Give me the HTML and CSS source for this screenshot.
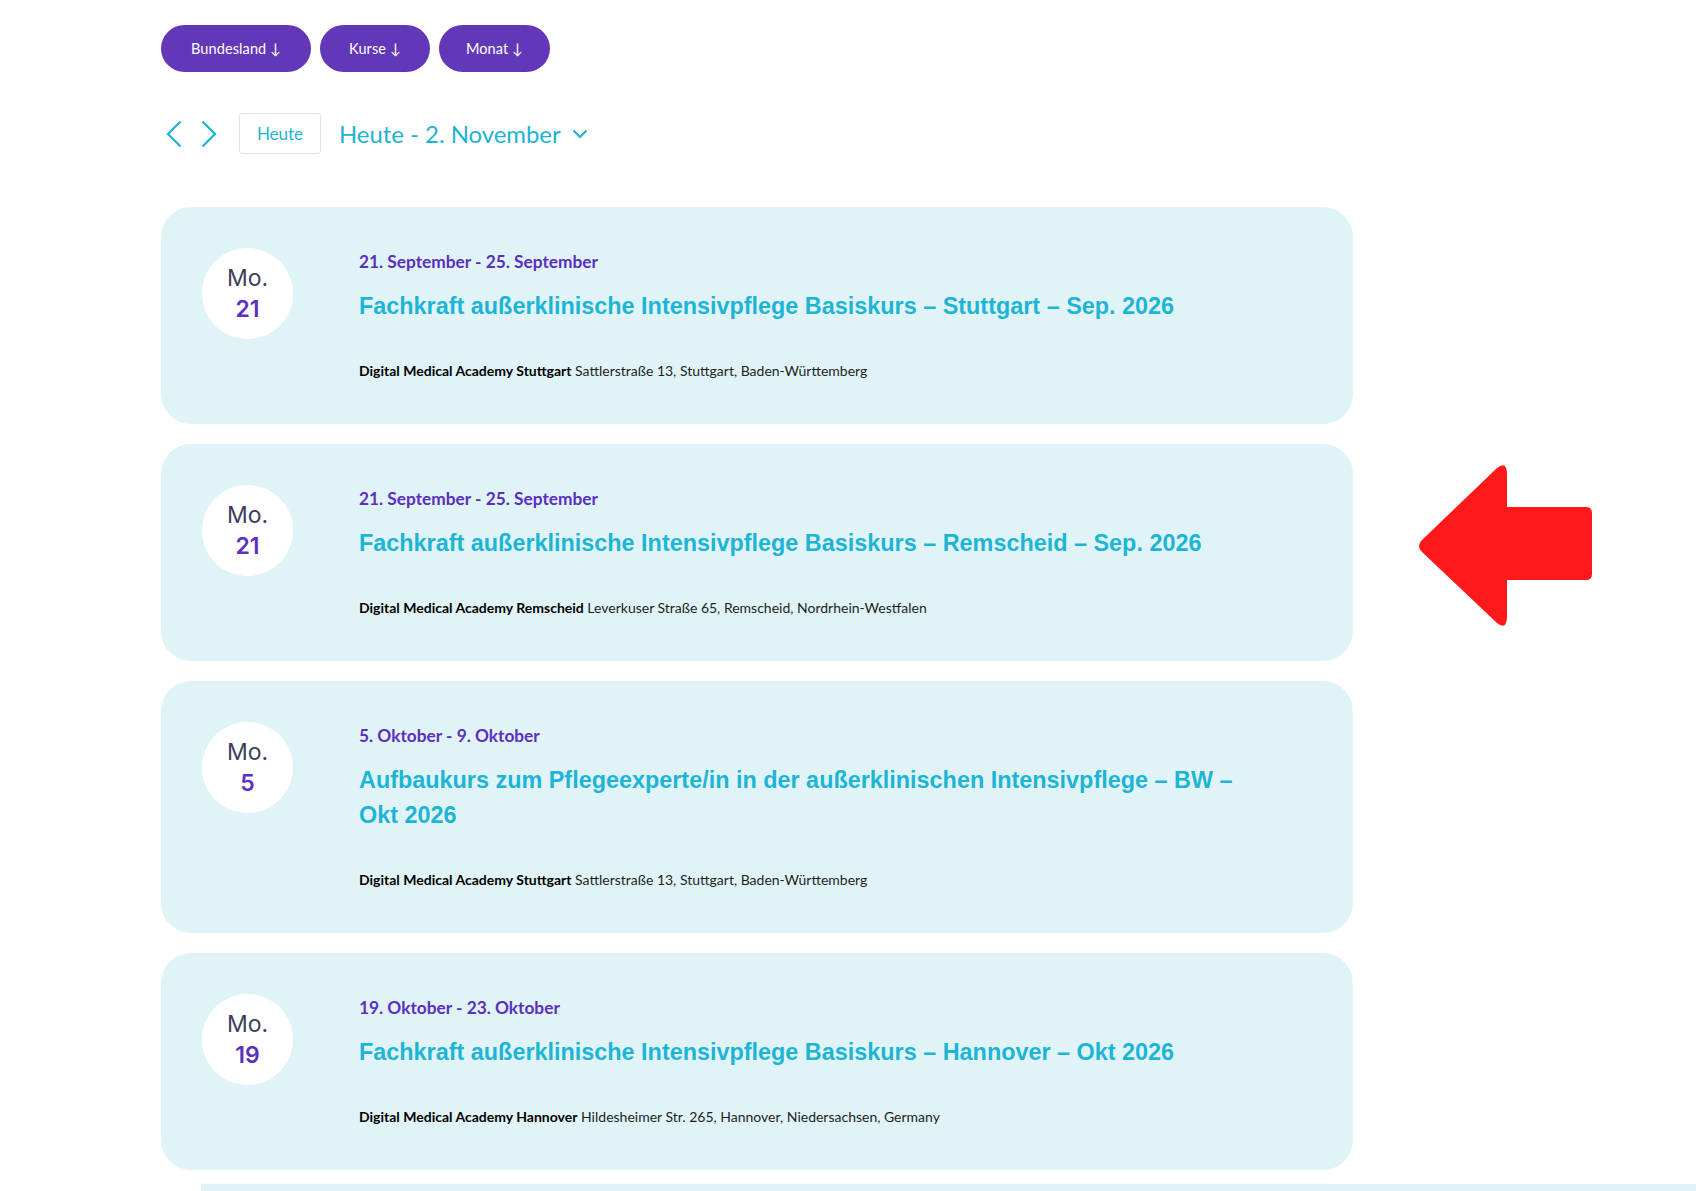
FILE: index.html
```html
<!DOCTYPE html>
<html lang="de">
<head>
<meta charset="utf-8">
<title>Kurse</title>
<link rel="stylesheet" href="styles.css">
</head>
<body>
<div class="page">
  <div class="filters">
    <button class="pill">Bundesland ↓</button>
    <button class="pill">Kurse ↓</button>
    <button class="pill">Monat ↓</button>
  </div>

  <div class="nav">
    <span class="nav-arrow prev"><svg width="16" height="28" viewBox="0 0 16 28"><polyline points="14.5,1.5 2,14 14.5,26.5" fill="none" stroke="#1cb3d4" stroke-width="2.2"/></svg></span>
    <span class="nav-arrow next"><svg width="16" height="28" viewBox="0 0 16 28"><polyline points="1.5,1.5 14,14 1.5,26.5" fill="none" stroke="#1cb3d4" stroke-width="2.2"/></svg></span>
    <span class="today-btn">Heute</span>
    <span class="cal-title">Heute - 2. November</span>
    <span class="cal-chevron"><svg width="16" height="10" viewBox="0 0 16 10"><polyline points="1.5,1.5 8,8 14.5,1.5" fill="none" stroke="#1cb3d4" stroke-width="2"/></svg></span>
  </div>

  <div class="list">
    <article class="card">
      <div class="day"><span class="dow">Mo.</span><span class="dnum">21</span></div>
      <div class="info">
        <div class="range">21. September - 25. September</div>
        <h2 class="title">Fachkraft außerklinische Intensivpflege Basiskurs – Stuttgart – Sep. 2026</h2>
        <div class="venue"><b>Digital Medical Academy Stuttgart</b> Sattlerstraße 13, Stuttgart, Baden-Württemberg</div>
      </div>
    </article>
    <article class="card">
      <div class="day"><span class="dow">Mo.</span><span class="dnum">21</span></div>
      <div class="info">
        <div class="range">21. September - 25. September</div>
        <h2 class="title">Fachkraft außerklinische Intensivpflege Basiskurs – Remscheid – Sep. 2026</h2>
        <div class="venue"><b>Digital Medical Academy Remscheid</b> Leverkuser Straße 65, Remscheid, Nordrhein-Westfalen</div>
      </div>
    </article>
    <article class="card">
      <div class="day"><span class="dow">Mo.</span><span class="dnum">5</span></div>
      <div class="info">
        <div class="range">5. Oktober - 9. Oktober</div>
        <h2 class="title">Aufbaukurs zum Pflegeexperte/in in der außerklinischen Intensivpflege – BW – Okt 2026</h2>
        <div class="venue"><b>Digital Medical Academy Stuttgart</b> Sattlerstraße 13, Stuttgart, Baden-Württemberg</div>
      </div>
    </article>
    <article class="card">
      <div class="day"><span class="dow">Mo.</span><span class="dnum">19</span></div>
      <div class="info">
        <div class="range">19. Oktober - 23. Oktober</div>
        <h2 class="title">Fachkraft außerklinische Intensivpflege Basiskurs – Hannover – Okt 2026</h2>
        <div class="venue"><b>Digital Medical Academy Hannover</b> Hildesheimer Str. 265, Hannover, Niedersachsen, Germany</div>
      </div>
    </article>
    <div class="next-strip"></div>
  </div>
</div>

<svg class="pointer-arrow" width="175" height="162" viewBox="0 0 175 162" aria-hidden="true">
  <path d="M 4,75 L 79,3 Q 89,-5 89,10 L 89,42 L 168,42 Q 174,42 174,48 L 174,109 Q 174,115 168,115 L 89,115 L 89,151 Q 89,166 79,158 L 4,87 Q -2,81 4,75 Z" fill="#fe1a1a"/>
</svg>
</body>
</html>
```

FILE: styles.css
```css
html, body {
  margin: 0;
  padding: 0;
  background: #ffffff;
}

body {
  font-family: "Lato", "Open Sans", sans-serif;
  overflow: hidden;
  height: 1191px;
  position: relative;
}

.page {
  padding: 25px 0 0 161px;
}

.filters {
  display: flex;
  gap: 9px;
}

.pill {
  height: 47px;
  padding: 0 29px;
  border: none;
  border-radius: 24px;
  background: #6238b9;
  color: #ffffff;
  font-family: "Lato", sans-serif;
  font-size: 14.5px;
  letter-spacing: 0.1px;
  display: flex;
  align-items: center;
}

.pill:first-child {
  padding: 0 30px;
}

.pill:last-child {
  padding: 0 27px;
}

.nav {
  margin-top: 41px;
  height: 41px;
  display: flex;
  align-items: center;
}

.nav-arrow {
  display: flex;
  align-items: center;
}

.nav-arrow.prev {
  margin-left: 5px;
}

.nav-arrow.next {
  margin-left: 19px;
}

.today-btn {
  margin-left: 22px;
  width: 82px;
  height: 41px;
  box-sizing: border-box;
  border: 1px solid #e1e1e1;
  border-radius: 3px;
  display: flex;
  align-items: center;
  justify-content: center;
  color: #1cb3d4;
  font-size: 17px;
}

.cal-title {
  margin-left: 18px;
  color: #1cb3d4;
  font-size: 23.9px;
  line-height: 41px;
}

.cal-chevron {
  margin-left: 11px;
  display: flex;
  align-items: center;
  padding-top: 1px;
}

.list {
  margin-top: 53px;
}

.card {
  width: 1192px;
  box-sizing: border-box;
  background: #e0f4f8;
  border-radius: 30px;
  padding: 41px 80px 43px 41px;
  display: grid;
  grid-template-columns: 91px 1fr;
  column-gap: 66px;
  margin-bottom: 20px;
}

.day {
  width: 91px;
  height: 91px;
  border-radius: 50%;
  background: #ffffff;
  display: flex;
  flex-direction: column;
  align-items: center;
  justify-content: center;
  font-family: "Inter", "Lato", sans-serif;
  font-size: 23px;
  line-height: 31px;
}

.dow {
  color: #3b3f5c;
  font-weight: 400;
}

.dnum {
  color: #5c30bf;
  font-weight: 600;
}

.info {
  padding-top: 2px;
}

.range {
  color: #5a2fbf;
  font-weight: 700;
  font-size: 17.3px;
  line-height: 24px;
}

.title {
  margin: 15px 0 0;
  color: #1db4d6;
  font-family: "Liberation Sans", Arial, sans-serif;
  font-weight: 700;
  font-size: 23.4px;
  line-height: 35px;
}

.venue {
  margin-top: 37px;
  color: #1e1e1e;
  font-size: 14px;
  line-height: 20px;
}

.venue b {
  color: #000000;
  font-weight: 700;
}

.next-strip {
  margin-left: 40px;
  margin-top: -6px;
  height: 40px;
  width: 1600px;
  background: #e0f4f8;
}

.pointer-arrow {
  position: absolute;
  left: 1418px;
  top: 465px;
}
```
